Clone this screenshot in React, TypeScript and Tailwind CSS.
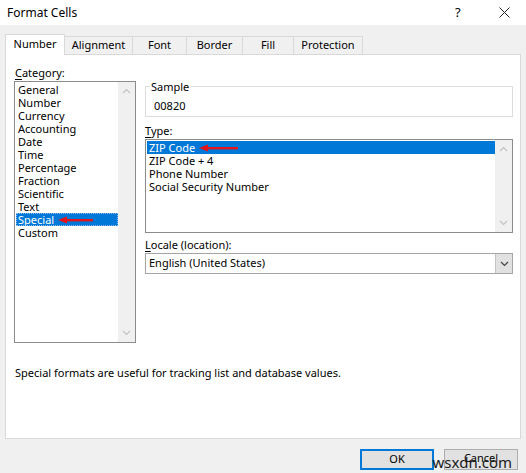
import React from "react";

const categories = [
  "General",
  "Number",
  "Currency",
  "Accounting",
  "Date",
  "Time",
  "Percentage",
  "Fraction",
  "Scientific",
  "Text",
  "Special",
  "Custom",
];

const types = ["ZIP Code", "ZIP Code + 4", "Phone Number", "Social Security Number"];

const tabs = [
  { name: "Number", w: "w-[60px]" },
  { name: "Alignment", w: "w-[68px]" },
  { name: "Font", w: "w-[54px]" },
  { name: "Border", w: "w-[56px]" },
  { name: "Fill", w: "w-[51px]" },
  { name: "Protection", w: "w-[69px]" },
];

function RedArrow({ width }: { width: number }) {
  return (
    <svg width={width} height="8" viewBox={`0 0 ${width} 8`} className="shrink-0">
      <polygon points="0,4 9,0.5 9,7.5" fill="#e3141b" />
      <rect x="8" y="3" width={width - 9} height="2.4" fill="#e3141b" />
    </svg>
  );
}

function Chevron({ up, color }: { up?: boolean; color: string }) {
  return (
    <svg width="9" height="6" viewBox="0 0 9 6">
      <polyline
        points={up ? "1,5 4.5,1.5 8,5" : "1,1 4.5,4.5 8,1"}
        fill="none"
        stroke={color}
        strokeWidth="1.2"
      />
    </svg>
  );
}

function ScrollBar() {
  return (
    <div className="w-[17px] bg-[#f0f0f0] flex flex-col justify-between items-center py-[6px]">
      <Chevron up color="#c2c2c2" />
      <Chevron color="#c2c2c2" />
    </div>
  );
}

export default function App() {
  return (
    <div
      className="w-[526px] h-[473px] bg-[#f0f0f0] text-[11px] text-black overflow-hidden flex flex-col"
      style={{ fontFamily: '"Noto Sans", "Segoe UI", sans-serif' }}
    >
      {/* title bar */}
      <div className="h-[25px] bg-white flex items-center shrink-0">
        <span className="pl-[7px] flex-1 leading-[15px] text-[12px]">Format Cells</span>
        <span className="w-[10px] mr-[34px] text-[13px] leading-none">?</span>
        <svg width="11" height="11" viewBox="0 0 11 11" className="mr-[16px]">
          <path d="M0.5 0.5 L10.5 10.5 M10.5 0.5 L0.5 10.5" stroke="#222" strokeWidth="1" />
        </svg>
      </div>

      {/* tabs */}
      <div className="flex items-end pl-[5px] mt-[8px] h-[21px] shrink-0">
        {tabs.map((t, i) =>
          i === 0 ? (
            <div
              key={t.name}
              className={`${t.w} h-[21px] bg-white border border-b-0 border-[#d9d9d9] flex items-center justify-center relative z-10 mb-[-1px] pb-[2px]`}
            >
              {t.name}
            </div>
          ) : (
            <div
              key={t.name}
              className={`${t.w} h-[18px] border border-l-0 border-b-0 border-[#d9d9d9] flex items-center justify-center`}
            >
              {t.name}
            </div>
          )
        )}
      </div>

      {/* tab panel */}
      <div className="ml-[5px] w-[516px] h-[385px] bg-white border border-[#d9d9d9] shrink-0 pl-[8px] pt-[10px]">
        <div className="flex">
          {/* category */}
          <div className="w-[122px] flex flex-col">
            <div className="h-[15px] leading-[15px] pl-[1px]">
              <span className="underline underline-offset-2">C</span>ategory:
            </div>
            <div className="mt-[1px] h-[262px] border border-[#8c8c8c] flex">
              <div className="flex-1 pt-[1px] pl-[1px]">
                {categories.map((c) =>
                  c === "Special" ? (
                    <div
                      key={c}
                      className="h-[13px] leading-[13px] bg-[#0078d7] text-white pl-[2px] flex items-center outline outline-1 outline-dotted outline-[#8fbce8] -outline-offset-1"
                    >
                      <span>{c}</span>
                      <span className="ml-[4px] flex items-center">
                        <RedArrow width={36} />
                      </span>
                    </div>
                  ) : (
                    <div key={c} className="h-[13px] leading-[13px] pl-[2px]">
                      {c}
                    </div>
                  )
                )}
              </div>
              <ScrollBar />
            </div>
          </div>

          {/* right column */}
          <div className="ml-[9px] w-[368px] flex flex-col">
            <div className="mt-[21px] h-[31px] border border-[#dcdcdc] relative pl-[8px] pt-[11px] leading-[15px]">
              <span className="absolute left-[4px] top-[-8px] bg-white px-[1px] leading-[15px]">
                Sample
              </span>
              00820
            </div>
            <div className="mt-[6px] h-[15px] leading-[15px]">
              <span className="underline underline-offset-2">T</span>ype:
            </div>
            <div className="mt-[1px] h-[94px] border border-[#8c8c8c] flex">
              <div className="flex-1 pt-[1px] pl-[1px]">
                {types.map((t, i) =>
                  i === 0 ? (
                    <div
                      key={t}
                      className="h-[13px] leading-[13px] bg-[#0078d7] text-white pl-[2px] flex items-center"
                    >
                      <span>{t}</span>
                      <span className="ml-[4px] flex items-center">
                        <RedArrow width={40} />
                      </span>
                    </div>
                  ) : (
                    <div key={t} className="h-[13px] leading-[13px] pl-[2px]">
                      {t}
                    </div>
                  )
                )}
              </div>
              <ScrollBar />
            </div>
            <div className="mt-[4px] h-[15px] leading-[15px]">
              <span className="underline underline-offset-2">L</span>ocale (location):
            </div>
            <div className="mt-[1px] h-[21px] border border-[#a5a5a5] flex">
              <div className="flex-1 pl-[3px] flex items-center">English (United States)</div>
              <div className="w-[17px] bg-[#e1e1e1] border-l border-[#c5c5c5] flex items-center justify-center">
                <Chevron color="#444" />
              </div>
            </div>
          </div>
        </div>
        <div className="mt-[22px] h-[15px] leading-[15px] pl-[1px]">
          Special formats are useful for tracking list and database values.
        </div>
      </div>

      {/* buttons */}
      <div className="mt-[10px] flex justify-end pr-[8px] gap-[10px] relative">
        <button className="w-[74px] h-[21px] bg-[#e1e1e1] border-2 border-[#0078d7] flex items-center justify-center">
          OK
        </button>
        <button className="w-[74px] h-[21px] bg-[#e1e1e1] border border-[#adadad] flex items-center justify-center pb-[3px]">
          Cancel
        </button>
        <span className="absolute right-[14px] top-[6px] text-[15px] leading-[15px] text-[#1a1a1a]">
          wsxdn.com
        </span>
      </div>
    </div>
  );
}
